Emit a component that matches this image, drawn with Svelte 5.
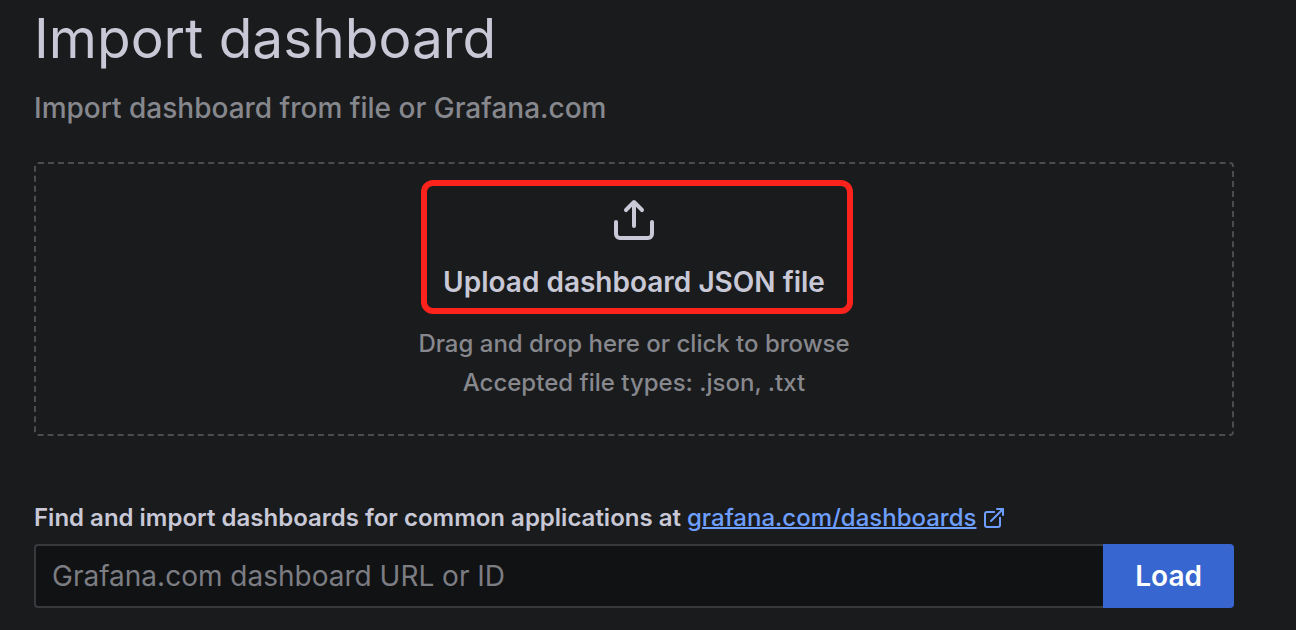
<script lang="ts">
  let dashboardId = $state('')
  let files: FileList | undefined = $state()
</script>

<main>
  <header>
    <h1>Import dashboard</h1>
    <p>Import dashboard from file or Grafana.com</p>
  </header>

  <label class="dropzone">
    <input class="file" type="file" accept=".json,.txt" bind:files>
    <span class="primary">
      <svg width="48" height="48" viewBox="0 0 24 24" aria-hidden="true">
        <path d="M8.71,7.71,11,5.41V15a1,1,0,0,0,2,0V5.41l2.29,2.3a1,1,0,0,0,1.42,0,1,1,0,0,0,0-1.42l-4-4a1,1,0,0,0-.33-.21,1,1,0,0,0-.76,0,1,1,0,0,0-.33.21l-4,4A1,1,0,1,0,8.71,7.71ZM21,12a1,1,0,0,0-1,1v6a1,1,0,0,1-1,1H5a1,1,0,0,1-1-1V13a1,1,0,0,0-2,0v6a3,3,0,0,0,3,3H19a3,3,0,0,0,3-3V13A1,1,0,0,0,21,12Z" />
      </svg>
      <span>Upload dashboard JSON file</span>
      <span class="highlight"></span>
    </span>
    <span class="hint">Drag and drop here or click to browse</span>
    <span class="hint">Accepted file types: .json, .txt</span>
  </label>

  <form onsubmit={(e) => e.preventDefault()}>
    <label class="caption" for="dashboard-id">
      Find and import dashboards for common applications at
      <a href="https://grafana.com/dashboards">grafana.com/dashboards<svg width="24" height="24" viewBox="0 0 24 24" aria-hidden="true">
        <path d="M18,10.82a1,1,0,0,0-1,1V19a1,1,0,0,1-1,1H5a1,1,0,0,1-1-1V8A1,1,0,0,1,5,7h7.18a1,1,0,0,0,0-2H5A3,3,0,0,0,2,8V19a3,3,0,0,0,3,3H16a3,3,0,0,0,3-3V11.82A1,1,0,0,0,18,10.82Zm3.92-8.2a1,1,0,0,0-.54-.54A1,1,0,0,0,21,2H15a1,1,0,0,0,0,2h3.59L8.29,14.29a1,1,0,0,0,0,1.42,1,1,0,0,0,1.42,0L20,5.41V9a1,1,0,0,0,2,0V3A1,1,0,0,0,21.92,2.62Z" />
      </svg></a>
    </label>
    <div class="row">
      <input id="dashboard-id" type="text" placeholder="Grafana.com dashboard URL or ID" bind:value={dashboardId}>
      <button type="submit">Load</button>
    </div>
  </form>
</main>

<style>
  :global(body) {
    background: #1a1b1d;
  }

  main {
    padding: 6px 62px 22px 34px;
    color: #c8c8d6;
    font-family: Inter, sans-serif;
    font-size: 28px;
    font-optical-sizing: none;
    line-height: 44px;
  }

  h1 {
    margin: 0 0 16px;
    font-size: 55px;
    font-weight: 400;
    line-height: 64px;
  }

  p {
    margin: 0 0 32px;
    color: #87888e;
    font-weight: 500;
  }

  svg {
    fill: currentColor;
  }

  .dropzone {
    position: relative;
    display: flex;
    flex-direction: column;
    align-items: center;
    padding: 32px;
    border: 2px dashed #4b4c50;
    border-radius: 4px;
    cursor: pointer;
  }

  .file {
    position: absolute;
    width: 1px;
    height: 1px;
    opacity: 0;
  }

  .primary {
    position: relative;
    display: flex;
    flex-direction: column;
    align-items: center;
    gap: 16px;
    margin-bottom: 20px;
    font-weight: 600;
  }

  .highlight {
    position: absolute;
    inset: -16px -28px -10px -22px;
    border: 6px solid #fc231c;
    border-radius: 12px;
    pointer-events: none;
  }

  .hint {
    color: #87888e;
    font-size: 24px;
    font-weight: 500;
    line-height: 39px;
  }

  form {
    margin-top: 66px;
  }

  .caption {
    display: block;
    margin-bottom: 10px;
    font-size: 24px;
    font-weight: 600;
    line-height: 32px;
  }

  a {
    color: #6e9fff;
    font-weight: 500;
    text-decoration: underline;
    text-decoration-thickness: 2px;
  }

  a svg {
    margin-left: 6px;
    vertical-align: -4px;
  }

  .row {
    display: flex;
    height: 64px;
  }

  .row input {
    flex: 1;
    min-width: 0;
    box-sizing: border-box;
    padding: 0 16px;
    border: 2px solid #38393c;
    border-right: 0;
    border-radius: 4px 0 0 4px;
    background: #111214;
    color: #c8c8d6;
    font: inherit;
  }

  .row input::placeholder {
    color: #7c7d83;
    opacity: 1;
  }

  button {
    padding: 0 32px;
    border: 0;
    border-radius: 0 4px 4px 0;
    background: #3866d0;
    color: #fff;
    font: inherit;
    font-weight: 600;
    cursor: pointer;
  }
</style>
